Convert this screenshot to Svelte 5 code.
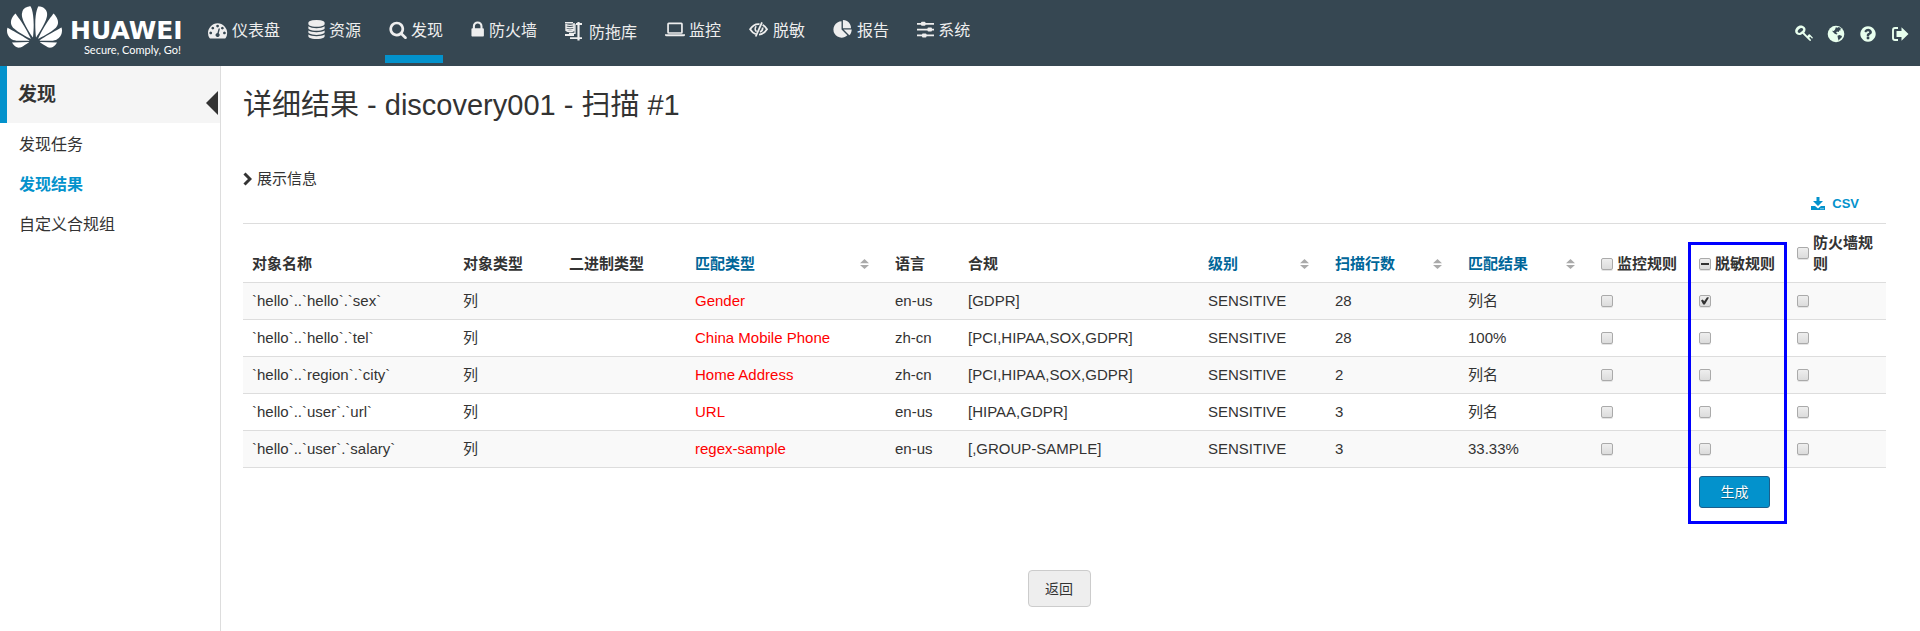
<script>
  const nav = [
    { id: 'dash', label: '仪表盘', w: 20 },
    { id: 'db', label: '资源', w: 17 },
    { id: 'search', label: '发现', w: 18, active: true },
    { id: 'lock', label: '防火墙', w: 14 },
    { id: 'dump', label: '防拖库', w: 20, low: true },
    { id: 'laptop', label: '监控', w: 20 },
    { id: 'eye', label: '脱敏', w: 20 },
    { id: 'pie', label: '报告', w: 20 },
    { id: 'sliders', label: '系统', w: 17 }
  ];
  const side = ['发现任务', '发现结果', '自定义合规组'];
  const columns = [
    { label: '对象名称' },
    { label: '对象类型' },
    { label: '二进制类型' },
    { label: '匹配类型', sort: true },
    { label: '语言' },
    { label: '合规' },
    { label: '级别', sort: true },
    { label: '扫描行数', sort: true },
    { label: '匹配结果', sort: true }
  ];
  const rules = ['监控规则', '脱敏规则', '防火墙规则'];
  let rows = $state([
    { name: '`hello`..`hello`.`sex`', match: 'Gender', lang: 'en-us', comp: '[GDPR]', count: 28, result: '列名', checks: [false, true, false] },
    { name: '`hello`..`hello`.`tel`', match: 'China Mobile Phone', lang: 'zh-cn', comp: '[PCI,HIPAA,SOX,GDPR]', count: 28, result: '100%', checks: [false, false, false] },
    { name: '`hello`..`region`.`city`', match: 'Home Address', lang: 'zh-cn', comp: '[PCI,HIPAA,SOX,GDPR]', count: 2, result: '列名', checks: [false, false, false] },
    { name: '`hello`..`user`.`url`', match: 'URL', lang: 'en-us', comp: '[HIPAA,GDPR]', count: 3, result: '列名', checks: [false, false, false] },
    { name: '`hello`..`user`.`salary`', match: 'regex-sample', lang: 'en-us', comp: '[,GROUP-SAMPLE]', count: 3, result: '33.33%', checks: [false, false, false] }
  ]);
  const all = (i) => rows.every((r) => r.checks[i]);
  const some = (i) => rows.some((r) => r.checks[i]) && !all(i);
  function toggle(i, on) {
    for (const r of rows) r.checks[i] = on;
  }
</script>

<div class="app">
  <header>
    <a class="brand" href="#home">
      <svg class="petals" viewBox="0 2.9 24 18.2" aria-hidden="true"><path d="M3.67 6.14S1.82 7.91 1.72 9.78v.35c.08 1.51 1.22 2.4 1.22 2.4 1.83 1.79 6.26 4.04 7.3 4.55 0 0 .06.03.1-.01l.02-.04v-.04C7.52 10.8 3.67 6.14 3.67 6.14zM9.65 18.6c-.02-.08-.1-.08-.1-.08l-7.38.26c.8 1.43 2.15 2.53 3.56 2.2.96-.25 3.16-1.78 3.88-2.3.06-.05.04-.09.04-.09zm.08-.78C6.49 15.63.21 12.28.21 12.28c-.15.46-.2.9-.21 1.3v.07c0 1.07.4 1.82.4 1.82.8 1.69 2.34 2.2 2.34 2.2.7.3 1.4.31 1.4.31.12.02 4.4 0 5.54 0 .05 0 .08-.05.08-.05v-.06c0-.03-.03-.05-.03-.05zM9.06 3.19a3.42 3.42 0 00-2.57 3.15v.41c.03.6.16 1.05.16 1.05.66 2.9 3.86 7.65 4.55 8.65.05.05.1.03.1.03a.1.1 0 00.06-.1c1.06-10.6-1.11-13.42-1.11-13.42-.32.02-1.19.23-1.19.23zm8.299 2.27s-.49-1.8-2.44-2.28c0 0-.57-.14-1.17-.22 0 0-2.18 2.81-1.12 13.43.01.07.06.08.06.08.07.03.1-.03.1-.03.72-1.03 3.9-5.76 4.55-8.64 0 0 .36-1.4.02-2.34zm-2.92 13.07s-.07 0-.09.05c0 0-.01.07.03.1.7.51 2.85 2 3.88 2.3 0 0 .16.05.43.06h.14c.69-.02 1.9-.37 3-2.26l-7.4-.25zm7.83-8.41c.14-2.06-1.94-3.97-1.94-3.98 0 0-3.85 4.66-6.67 10.8 0 0-.03.08.02.13l.04.01h.06c1.06-.53 5.46-2.77 7.28-4.54 0 0 1.15-.93 1.21-2.42zm1.52 2.14s-6.28 3.37-9.52 5.55c0 0-.05.04-.03.11 0 0 .03.06.07.06 1.16 0 5.56 0 5.67-.02 0 0 .57-.02 1.27-.29 0 0 1.56-.5 2.37-2.27 0 0 .73-1.45.17-3.14z" /></svg>
      <span class="words">
        <span class="name">HUAWEI</span>
        <span class="tag">Secure, Comply, Go!</span>
      </span>
    </a>
    <nav>
      {#each nav as item}
        <a href="#{item.id}" class:active={item.active} class:low={item.low}>
          <svg style="width: {item.w}px" height="20" viewBox="0 0 {item.w} 20" aria-hidden="true">
            {#if item.id === 'dash'}
              <g transform="translate(0 .6) scale(.0107)"><path d="M384 1152q0-53-37.5-90.5t-90.5-37.5-90.5 37.5-37.5 90.5 37.5 90.5 90.5 37.5 90.5-37.5 37.5-90.5zm192-448q0-53-37.5-90.5t-90.5-37.5-90.5 37.5-37.5 90.5 37.5 90.5 90.5 37.5 90.5-37.5 37.5-90.5zm428 481l101-382q6-26-7.5-48.5t-38.5-29.5-48 6.5-30 39.5l-101 382q-60 5-107 43.5t-63 98.5q-20 77 20 146t117 89 146-20 89-117q16-60-6-117t-72-91zm660-33q0-53-37.5-90.5t-90.5-37.5-90.5 37.5-37.5 90.5 37.5 90.5 90.5 37.5 90.5-37.5 37.5-90.5zm-640-640q0-53-37.5-90.5t-90.5-37.5-90.5 37.5-37.5 90.5 37.5 90.5 90.5 37.5 90.5-37.5 37.5-90.5zm448 192q0-53-37.5-90.5t-90.5-37.5-90.5 37.5-37.5 90.5 37.5 90.5 90.5 37.5 90.5-37.5 37.5-90.5zm320 448q0 261-141 483-19 29-54 29h-1402q-35 0-54-29-141-221-141-483 0-182 71-348t191-286 286-191 348-71 348 71 286 191 191 286 71 348z" /></g>
            {:else if item.id === 'db'}
              <g transform="translate(-1 0) scale(.0106)"><path d="M896 768q237 0 443-43t325-127v170q0 69-103 128t-280 93.5-385 34.5-385-34.5-280-93.5-103-128v-170q119 84 325 127t443 43zm0 768q237 0 443-43t325-127v170q0 69-103 128t-280 93.5-385 34.5-385-34.5-280-93.5-103-128v-170q119 84 325 127t443 43zm0-384q237 0 443-43t325-127v170q0 69-103 128t-280 93.5-385 34.5-385-34.5-280-93.5-103-128v-170q119 84 325 127t443 43zm0-1152q208 0 385 34.5t280 93.5 103 128v128q0 69-103 128t-280 93.5-385 34.5-385-34.5-280-93.5-103-128v-128q0-69 103-128t280-93.5 385-34.5z" /></g>
            {:else if item.id === 'search'}
              <g transform="translate(-.3 .3) scale(.0105)"><path d="M1216 832q0-185-131.5-316.5t-316.5-131.5-316.5 131.5-131.5 316.5 131.5 316.5 316.5 131.5 316.5-131.5 131.5-316.5zm512 832q0 52-38 90t-90 38q-54 0-90-38l-343-342q-179 124-399 124-143 0-273.5-55.5t-225-150-150-225-55.5-273.5 55.5-273.5 150-225 225-150 273.5-55.5 273.5 55.5 225 150 150 225 55.5 273.5q0 220-124 399l343 343q37 37 37 90z" /></g>
            {:else if item.id === 'lock'}
              <g transform="translate(-3 0) scale(.0108)"><path d="M640 768h512v-192q0-106-75-181t-181-75-181 75-75 181v192zm832 96v576q0 40-28 68t-68 28h-960q-40 0-68-28t-28-68v-576q0-40 28-68t68-28h32v-192q0-184 132-316t316-132 316 132 132 316v192h32q40 0 68 28t28 68z" /></g>
            {:else if item.id === 'dump'}
              <g fill="none" stroke="currentColor" transform="translate(0 -1)">
                <path d="M0 1.500h8M11 3h6M0 14h9M5 17.200h12" stroke-width="1.800" />
                <path d="M13.500 1v18.500" stroke-width="2.200" />
                <path d="M1 3.500c2 1.200 6 1.200 8 0M1 5.800c2 1.200 6 1.200 8 0M1 8.100c2 1.200 6 1.200 8 0M1 3v6.500c2 1.500 6 1.500 8 0V2" stroke-width="1.400" />
                <path d="M4 12.300h6V3" stroke-width="1.200" />
              </g>
            {:else if item.id === 'laptop'}
              <path d="M3.700 2.500h12.600q1.500 0 1.500 1.500v8.300q0 1.500-1.500 1.500H3.700q-1.500 0-1.500-1.500V4q0-1.500 1.500-1.500zm.2 1.700v8h12.200v-8zM0 14.300h20v.8q0 1.200-1.500 1.200h-17Q0 16.300 0 15.100z" fill-rule="evenodd" />
            {:else if item.id === 'eye'}
              <g fill="none" stroke="currentColor" stroke-width="1.8">
                <path d="M10.500 4.100C6.500 3.700 3.100 6 1.100 9.300c1.400 2.300 3.300 4 5.700 4.800M13.600 4.900c1.800.9 3.300 2.500 4.400 4.400-1.700 2.800-4.400 5-8 5.300" />
                <path d="M7.200 6.300c-1.500 1.800-1.500 4 .4 5.400" stroke-width="1.500" />
                <path d="M13 2.300L6.700 16.500" />
                <path d="M13.500 7.500c.4 2-.8 3.800-2.500 4.500" />
              </g>
            {:else if item.id === 'pie'}
              <g transform="translate(.4 0) scale(.0106)"><path d="M768 890l546 546q-106 108-247.500 168t-298.500 60q-209 0-385.500-103t-279.500-279.500-103-385.500 103-385.500 279.500-279.500 385.500-103v762zm187 6h773q0 157-60 298.500t-168 247.500zm709-128h-768v-768q209 0 385.500 103t279.500 279.500 103 385.500z" /></g>
            {:else}
              <path d="M0 3h17v1.700H0zM0 8.800h17v1.700H0zM0 14.600h17v1.700H0z" />
              <rect x="4" y="1.800" width="4.500" height="4" rx="1" />
              <rect x="10.500" y="7.600" width="4.500" height="4" rx="1" />
              <rect x="5" y="13.400" width="4.500" height="4" rx="1" />
            {/if}
          </svg>
          <span>{item.label}</span>
        </a>
      {/each}
    </nav>
    <div class="tools">
      <button aria-label="密钥"><svg viewBox="0 0 18 18"><path d="M9.700 2.200C7.500-.1 4 .1 1.900 2.200-.4 4.500-.3 7.500 1.500 9c1.900 1.600 4.400 1.200 6-.2l6.800 6.700c1 1 2 .2 1.600-.8l-1.700-1.900 1-1 1.500 1.500c.7.500 1.300-.1 1.100-.8l-2.900-3.100c-.5-.4-.9-.3-1.200.1l-1.400 1.400-3-3.100c1.400-2 1.700-4.100.4-5.600zM7.800 3.600c1 1-.2 1.900-1.300 3C5.200 7.900 4.200 8.300 3.100 7.400c-1-1 0-2.300 1.200-3.400 1.200-1.100 2.500-1.300 3.500-.4z" fill-rule="evenodd" /></svg></button>
      <button aria-label="语言"><svg viewBox="0 0 18 18"><circle cx="9" cy="9" r="8.300" /><path class="cut" d="M8.800 2.200l1.700.5 1.200-.8 3 1.700-1.700.2.900 1.400-1.600.2-.6 1.700-1.800-.5-.8 1.400 1.500.5-1 .9-1.900-.7-1.200-1.300L5 5.800l1.800.2 1.300-1.500zM10.500 10.800l2-.8 2.500.9-.6 1.800-1.800 1.600-.9 1.500-.8-2.500z" /></svg></button>
      <button aria-label="帮助"><svg viewBox="40 0 1712 1792"><path d="M1024 1376v-192q0-14-9-23t-23-9h-192q-14 0-23 9t-9 23v192q0 14 9 23t23 9h192q14 0 23-9t9-23zm256-672q0-88-55.500-163t-138.500-116-170-41q-243 0-371 213-15 24 8 42l132 100q7 6 19 6 16 0 25-12 53-68 86-92 34-24 86-24 48 0 85.500 26t37.500 59q0 38-20 61t-68 45q-63 28-115.500 86.500t-52.500 125.500v36q0 14 9 23t23 9h192q14 0 23-9t9-23q0-19 21.500-49.500t54.500-49.500q32-18 49-28.500t46-35 44.500-48 28-60.500 12.500-81zm384 192q0 209-103 385.500t-279.500 279.500-385.500 103-385.500-103-279.500-279.500-103-385.500 103-385.500 279.500-279.500 385.500-103 385.500 103 279.500 279.500 103 385.500z" /></svg></button>
      <button aria-label="退出"><svg viewBox="0 0 18 18"><path d="M7 3H4Q2 3 2 5v8q0 2 2 2h3" fill="none" stroke="currentColor" stroke-width="1.900" /><path d="M10.500 2.200L17.500 9l-7 6.800V12H5.500V6h5z" /></svg></button>
    </div>
  </header>

  <div class="body">
    <aside>
      <div class="side-title">
        <h2>发现</h2>
        <button class="fold" aria-label="收起"><svg viewBox="0 0 12 24"><path d="M12 0v24L0 12z" /></svg></button>
      </div>
      <ul>
        {#each side as s, i}
          <li><a href="#side-{i}" class:current={i === 1}>{s}</a></li>
        {/each}
      </ul>
    </aside>

    <main>
      <h1>详细结果 - discovery001 - 扫描 #1</h1>
      <button class="info">
        <svg viewBox="0 0 9 14"><path d="M1.500 1.500L7 7l-5.500 5.500" fill="none" stroke="currentColor" stroke-width="3" /></svg>展示信息
      </button>
      <div class="export">
        <a href="#csv">
          <svg viewBox="0 0 14 14"><path d="M5.500 0h3v4H12L7 9 2 4h3.500zM0 9h4l3 2.500L10 9h4v4H0zm9.500 2.300v.9h1v-.9zm2 0v.9h1v-.9z" fill-rule="evenodd" /></svg>CSV
        </a>
      </div>

      <table>
        <colgroup>
          {#each Array(12) as _}<col />{/each}
        </colgroup>
        <thead>
          <tr>
            {#each columns as c}
              <th scope="col">
                {#if c.sort}
                  <button class="sort">{c.label}<svg viewBox="0 0 9 10"><path d="M4.500 0L9 4.200H0zM0 6h9L4.500 10z" /></svg></button>
                {:else}{c.label}{/if}
              </th>
            {/each}
            {#each rules as rule, i}
              <th scope="col" class="rule">
                <label>
                  <input type="checkbox" checked={all(i)} indeterminate={some(i)} onchange={(e) => toggle(i, e.currentTarget.checked)} />
                  <span>{rule}</span>
                </label>
                {#if i === 1}<span class="frame"></span>{/if}
              </th>
            {/each}
          </tr>
        </thead>
        <tbody>
          {#each rows as r}
            <tr>
              <td>{r.name}</td>
              <td>列</td>
              <td></td>
              <td class="hit">{r.match}</td>
              <td>{r.lang}</td>
              <td>{r.comp}</td>
              <td>SENSITIVE</td>
              <td>{r.count}</td>
              <td>{r.result}</td>
              {#each rules as rule, i}
                <td><input type="checkbox" aria-label="{rule} {r.name}" bind:checked={r.checks[i]} /></td>
              {/each}
            </tr>
          {/each}
        </tbody>
        <tfoot>
          <tr>
            <td colspan="10"></td>
            <td><button class="primary">生成</button></td>
            <td></td>
          </tr>
        </tfoot>
      </table>

      <div class="back"><button>返回</button></div>
    </main>
  </div>
</div>

<style>
  :global(body) {
    margin: 0;
    background: #fff;
  }
  .app {
    display: flex;
    flex-direction: column;
    min-height: 100vh;
    color: #333;
    font: 15px/21px "Liberation Sans", "Noto Sans CJK SC", sans-serif;
  }
  .app * {
    box-sizing: border-box;
  }
  a {
    color: inherit;
    text-decoration: none;
  }
  button {
    padding: 0;
    border: 0;
    background: none;
    color: inherit;
    font: inherit;
    cursor: pointer;
  }
  svg {
    display: block;
    flex: none;
    fill: currentColor;
  }

  header {
    display: flex;
    height: 66px;
    background: #364752;
    color: #eee;
  }
  .brand {
    display: flex;
    width: 208px;
    padding: 6px 0 0 7px;
    gap: 8px;
    color: #fff;
  }
  .petals {
    width: 55px;
    height: 42px;
  }
  .words {
    display: flex;
    flex-direction: column;
    width: 113px;
    padding-top: 13px;
  }
  .name {
    font: bold 25px/24px "DejaVu Sans", sans-serif;
  }
  .tag {
    align-self: flex-end;
    padding-right: 2px;
    font: 11px/13px Lato, sans-serif;
    white-space: nowrap;
  }
  nav {
    display: flex;
    gap: 24px;
    font-size: 16px;
    margin-left: -4px;
  }
  nav a {
    display: flex;
    align-items: center;
    gap: 4px;
    height: 63px;
    padding: 5px 0 0 4px;
    border-bottom: 8px solid transparent;
    white-space: nowrap;
  }
  nav a.active {
    border-color: #0392cc;
  }
  nav a.low {
    padding-top: 9px;
  }
  .tools {
    display: flex;
    align-items: center;
    gap: 14px;
    margin-left: auto;
    padding: 2px 11px 0 0;
    color: #e8ffee;
  }
  .tools svg {
    width: 18px;
    height: 18px;
  }
  .cut {
    fill: #364752;
  }

  .body {
    display: flex;
    flex: 1;
  }
  aside {
    flex: none;
    width: 221px;
    border-right: 1px solid #ddd;
  }
  .side-title {
    display: flex;
    justify-content: space-between;
    height: 57px;
    padding: 0 2px 0 11px;
    border-left: 7px solid #0392cc;
    background: #f5f5f5;
  }
  h2 {
    margin: 0;
    font-size: 19px;
    line-height: 58px;
  }
  .fold {
    padding-top: 16px;
  }
  .fold svg {
    width: 12px;
    height: 24px;
  }
  ul {
    margin: 0;
    padding: 2px 0 0 19px;
    list-style: none;
    font-size: 16px;
    line-height: 40px;
  }
  .current {
    color: #0392cc;
    font-weight: bold;
  }

  main {
    flex: 1;
    min-width: 0;
    padding: 19px 34px 24px 22px;
  }
  h1 {
    margin: 0 0 44px;
    font-size: 29px;
    font-weight: normal;
    line-height: 40px;
  }
  .info {
    display: flex;
    align-items: center;
    gap: 5px;
    line-height: 20px;
  }
  .info svg {
    width: 9px;
    height: 14px;
  }
  .export {
    display: flex;
    justify-content: flex-end;
    padding: 5px 27px 9px 0;
    color: #0392cc;
    font-size: 13px;
    font-weight: bold;
    line-height: 20px;
  }
  .export a {
    display: flex;
    align-items: center;
    gap: 7px;
  }
  .export svg {
    width: 14px;
    height: 14px;
  }

  table {
    width: 100%;
    table-layout: fixed;
    border-spacing: 0;
  }
  col { width: 98px; }
  col:nth-child(1) { width: 211px; }
  col:nth-child(2) { width: 106px; }
  col:nth-child(3) { width: 126px; }
  col:nth-child(4) { width: 200px; }
  col:nth-child(5) { width: 73px; }
  col:nth-child(6) { width: 240px; }
  col:nth-child(7) { width: 127px; }
  col:nth-child(8), col:nth-child(9) { width: 133px; }
  th,
  td {
    padding: 7px 0 8px 9px;
    border-top: 1px solid #ddd;
    text-align: left;
    white-space: nowrap;
  }
  th {
    padding-top: 8px;
    vertical-align: bottom;
  }
  tbody tr:nth-child(odd) {
    background: #f9f9f9;
  }
  tfoot td {
    padding-top: 8px;
  }
  .hit {
    color: #f00;
  }
  .sort {
    display: flex;
    align-items: center;
    justify-content: space-between;
    width: 100%;
    padding-right: 17px;
    color: #069;
  }
  .sort svg {
    width: 9px;
    height: 10px;
    color: #aaa;
  }
  .rule {
    position: relative;
    padding-right: 9px;
    white-space: normal;
  }
  .rule label {
    display: flex;
    align-items: center;
    gap: 4px;
  }
  .rule:not(:last-child) {
    padding-right: 0;
  }
  .frame {
    position: absolute;
    top: 18px;
    left: -2px;
    right: 1px;
    height: 282px;
    border: 3px solid #00f;
    pointer-events: none;
  }
  input {
    display: block;
    flex: none;
    position: relative;
    width: 12px;
    height: 12px;
    margin: 0;
    appearance: none;
    border: 1px solid #aaa;
    border-radius: 2px;
    background: linear-gradient(#eee, #dcdcdc);
    box-shadow: 0 1px 0 #e4e4e4;
  }
  input:checked::after,
  input:indeterminate::after {
    content: "";
    position: absolute;
    inset: 1px;
    background: #333;
    clip-path: polygon(0 50%, 22% 38%, 40% 60%, 75% 8%, 100% 12%, 48% 100%, 28% 100%);
  }
  input:indeterminate::after {
    inset: 4px 1px;
    clip-path: none;
  }
  .primary {
    display: block;
    width: 71px;
    height: 32px;
    border: 1px solid #1b5f8c;
    border-radius: 3px;
    background: #0392cc;
    color: #fff;
    font-size: 14px;
    line-height: 29px;
    text-shadow: 0 1px 1px #0006;
  }
  .back {
    display: flex;
    justify-content: center;
    padding: 54px 11px 0 0;
  }
  .back button {
    width: 63px;
    height: 37px;
    padding-top: 2px;
    border: 1px solid #ccc;
    border-radius: 4px;
    background: #eee;
    font-size: 14px;
  }
</style>
